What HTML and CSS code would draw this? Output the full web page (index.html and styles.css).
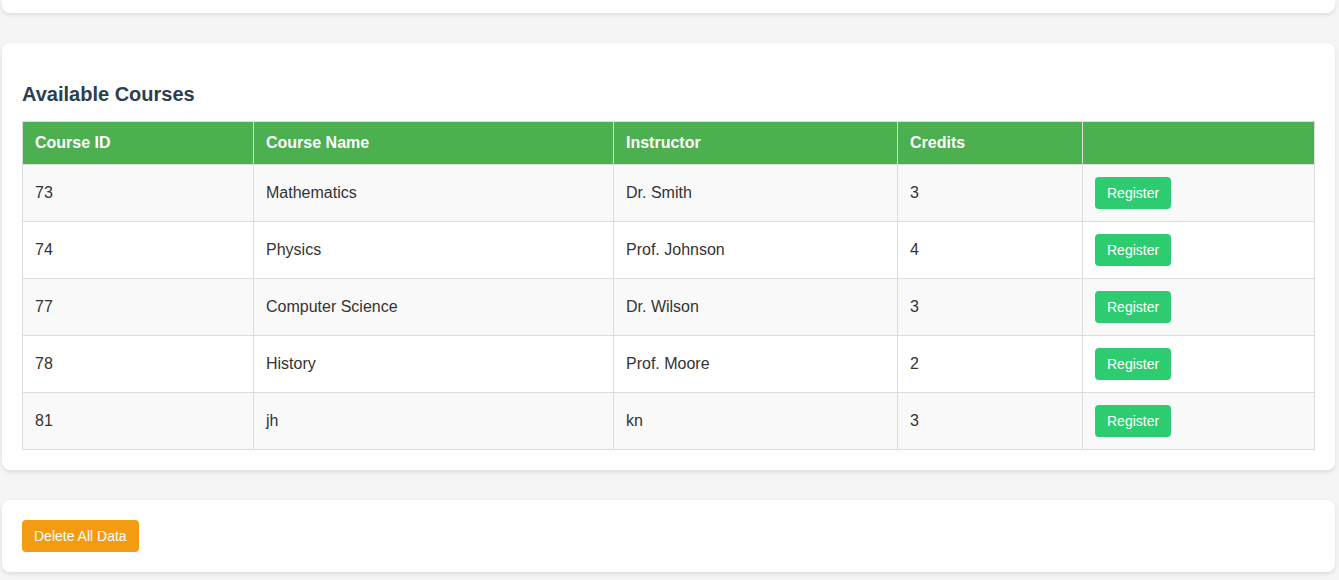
FILE: index.html
```html
<!DOCTYPE html>
<html>
<head>
<meta charset="utf-8">
<link rel="stylesheet" href="styles.css">
</head>
<body>
<div class="page">
  <div class="card card-stub"></div>
  <div class="card">
    <h2 class="title">Available Courses</h2>
    <table class="courses">
      <colgroup>
        <col class="c-id"><col class="c-name"><col class="c-inst"><col class="c-cred"><col class="c-act">
      </colgroup>
      <thead>
        <tr><th>Course ID</th><th>Course Name</th><th>Instructor</th><th>Credits</th><th></th></tr>
      </thead>
      <tbody>
        <tr><td>73</td><td>Mathematics</td><td>Dr. Smith</td><td>3</td><td><button class="btn btn-green">Register</button></td></tr>
        <tr><td>74</td><td>Physics</td><td>Prof. Johnson</td><td>4</td><td><button class="btn btn-green">Register</button></td></tr>
        <tr><td>77</td><td>Computer Science</td><td>Dr. Wilson</td><td>3</td><td><button class="btn btn-green">Register</button></td></tr>
        <tr><td>78</td><td>History</td><td>Prof. Moore</td><td>2</td><td><button class="btn btn-green">Register</button></td></tr>
        <tr><td>81</td><td>jh</td><td>kn</td><td>3</td><td><button class="btn btn-green">Register</button></td></tr>
      </tbody>
    </table>
  </div>
  <div class="card">
    <button class="btn btn-orange">Delete All Data</button>
  </div>
</div>
</body>
</html>
```
FILE: styles.css
```css
html, body {
  margin: 0;
  padding: 0;
  background: #f5f5f5;
  font-family: "Liberation Sans", Arial, sans-serif;
  color: #333;
}
.page {
  display: flex;
  flex-direction: column;
  gap: 30px;
  padding: 0 4px 8px 2px;
}
.card {
  background: #fff;
  border-radius: 8px;
  box-shadow: 0 2px 4px rgba(0, 0, 0, 0.1);
  padding: 20px;
}
.card-stub {
  height: 13px;
  padding: 0;
  border-radius: 0 0 8px 8px;
}
.title {
  margin: 20px 0 15px;
  font-size: 20px;
  font-weight: bold;
  color: #2c3e50;
  line-height: 23px;
}
.courses {
  width: 100%;
  border-collapse: collapse;
  table-layout: fixed;
  font-size: 16px;
}
.c-id { width: 231px; }
.c-name { width: 360px; }
.c-inst { width: 284px; }
.c-cred { width: 185px; }
.courses th, .courses td {
  border: 1px solid #ddd;
  padding: 12px;
  text-align: left;
  line-height: 18px;
}
.courses th {
  background: #4caf50;
  color: #fff;
  font-weight: bold;
}
.courses tbody tr:nth-child(odd) td {
  background: #f9f9f9;
}
.courses tbody tr:nth-child(even) td {
  background: #fff;
}
.btn {
  border: none;
  border-radius: 4px;
  color: #fff;
  font-family: "Liberation Sans", Arial, sans-serif;
  font-size: 14px;
  line-height: 16px;
  padding: 8px 12px;
  cursor: pointer;
  display: block;
}
.btn-green { background: #2ecc71; }
.btn-orange { background: #f39c12; }
```
